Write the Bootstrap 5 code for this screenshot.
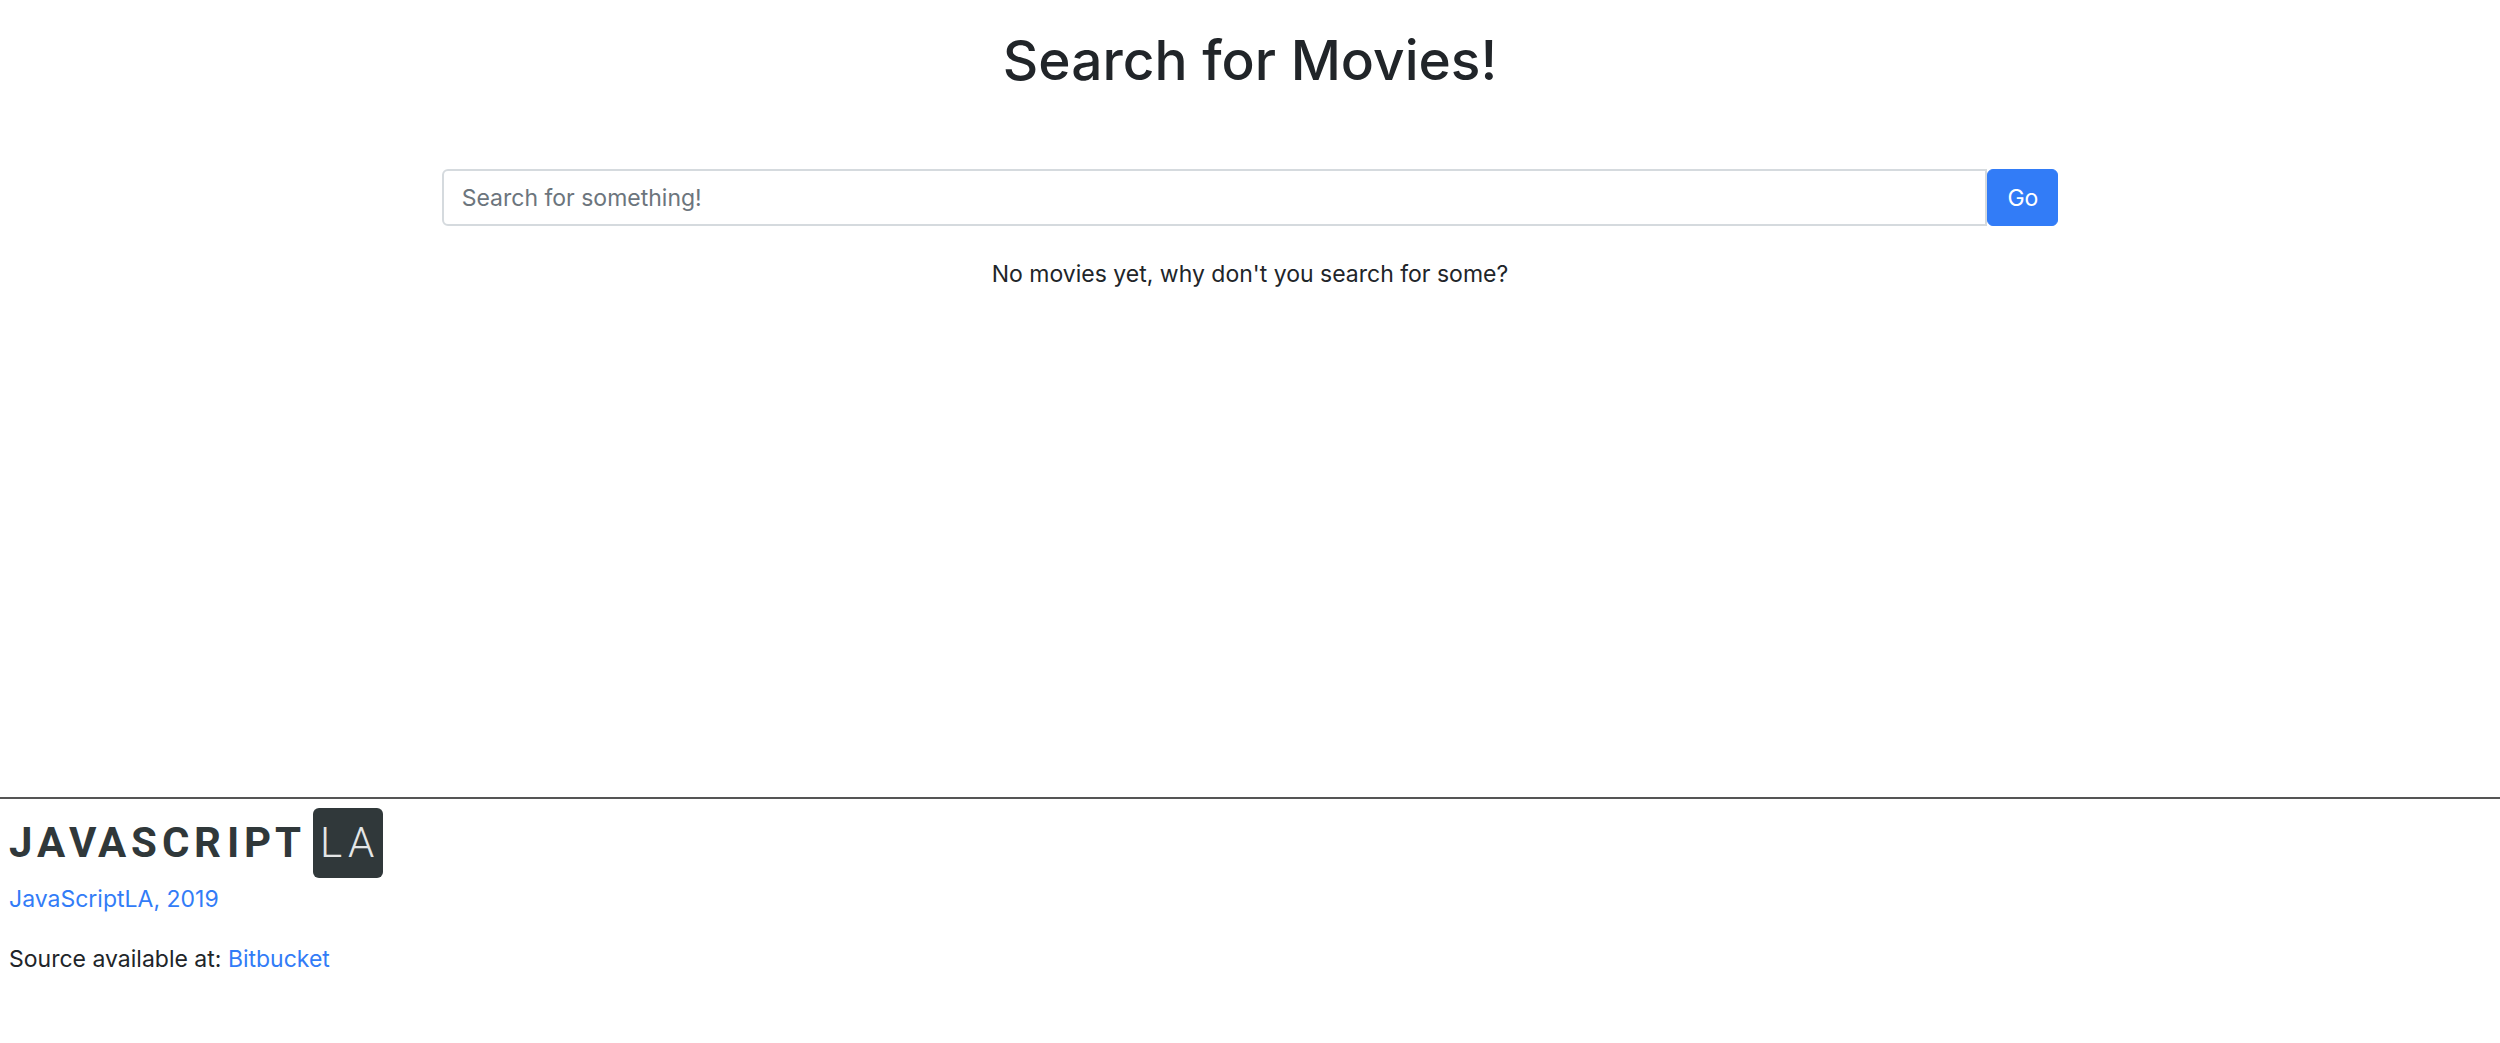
<!DOCTYPE html>
<html lang="en">
<head>
<meta charset="utf-8">
<meta name="viewport" content="width=device-width, initial-scale=1">
<title>Search for Movies!</title>
<link href="https://cdn.jsdelivr.net/npm/bootstrap@5.3.0/dist/css/bootstrap.min.css" rel="stylesheet">
<style>
  body { font-family: Inter, "Liberation Sans", sans-serif; font-size: 23px; line-height: 36px; color: #212529; }
  .page-title { font-size: 55px; line-height: 72px; font-weight: 500; padding-top: 24px; margin-bottom: 73px; }
  .search-row { --bs-gutter-x: 50px; }
  .search-row .form-control { font-size: 23px; line-height: 36px; padding: 9px 18px; border: 2px solid #d5dade; border-radius: 6px 0 0 6px; height: 57px; }
  .search-row .form-control::placeholder { color: #6c757d; }
  .search-row .btn { --bs-btn-bg: #327cf7; --bs-btn-border-color: #327cf7; font-size: 23px; line-height: 36px; padding: 0 19px; border-radius: 6px; }
  .empty-note { margin-top: 30px; }
  .site-footer { border-top: 2px solid #555; height: 246px; padding: 8px 9px; }
  .site-footer a { color: #327cf7; text-decoration: none; }
  .brand-logo { width: 376px; height: 72px; margin-bottom: 2px; }
  .brand-logo text { font-family: Roboto, "Liberation Sans", sans-serif; font-size: 42px; }
</style>
</head>
<body class="d-flex flex-column min-vh-100">
<main class="flex-grow-1 overflow-hidden">
  <h1 class="page-title text-center">Search for Movies!</h1>
  <div class="row search-row justify-content-center mx-0">
    <div class="col-8">
      <form class="d-flex">
        <input type="text" class="form-control flex-grow-1" placeholder="Search for something!" aria-label="Search for movies">
        <button type="button" class="btn btn-primary">Go</button>
      </form>
    </div>
  </div>
  <p class="empty-note text-center mb-0">No movies yet, why don't you search for some?</p>
</main>
<footer class="site-footer">
  <a href="#" class="d-block">
    <svg class="brand-logo d-block" viewBox="0 0 376 72" role="img" aria-label="JavaScript LA">
      <text y="50" x="0 28 60 89 122 153 185 218 235 266" font-weight="700" fill="#30383a">JAVASCRIPT</text>
      <rect x="304" y="1" width="70" height="70" rx="6" fill="#30383a"/>
      <text y="50" x="311 339" font-weight="300" fill="#e4e6e6">LA</text>
    </svg>
    JavaScriptLA, 2019
  </a>
  <p class="mt-4 mb-0">Source available at: <a href="#">Bitbucket</a></p>
</footer>
<script src="https://cdn.jsdelivr.net/npm/bootstrap@5.3.0/dist/js/bootstrap.bundle.min.js"></script>
</body>
</html>
